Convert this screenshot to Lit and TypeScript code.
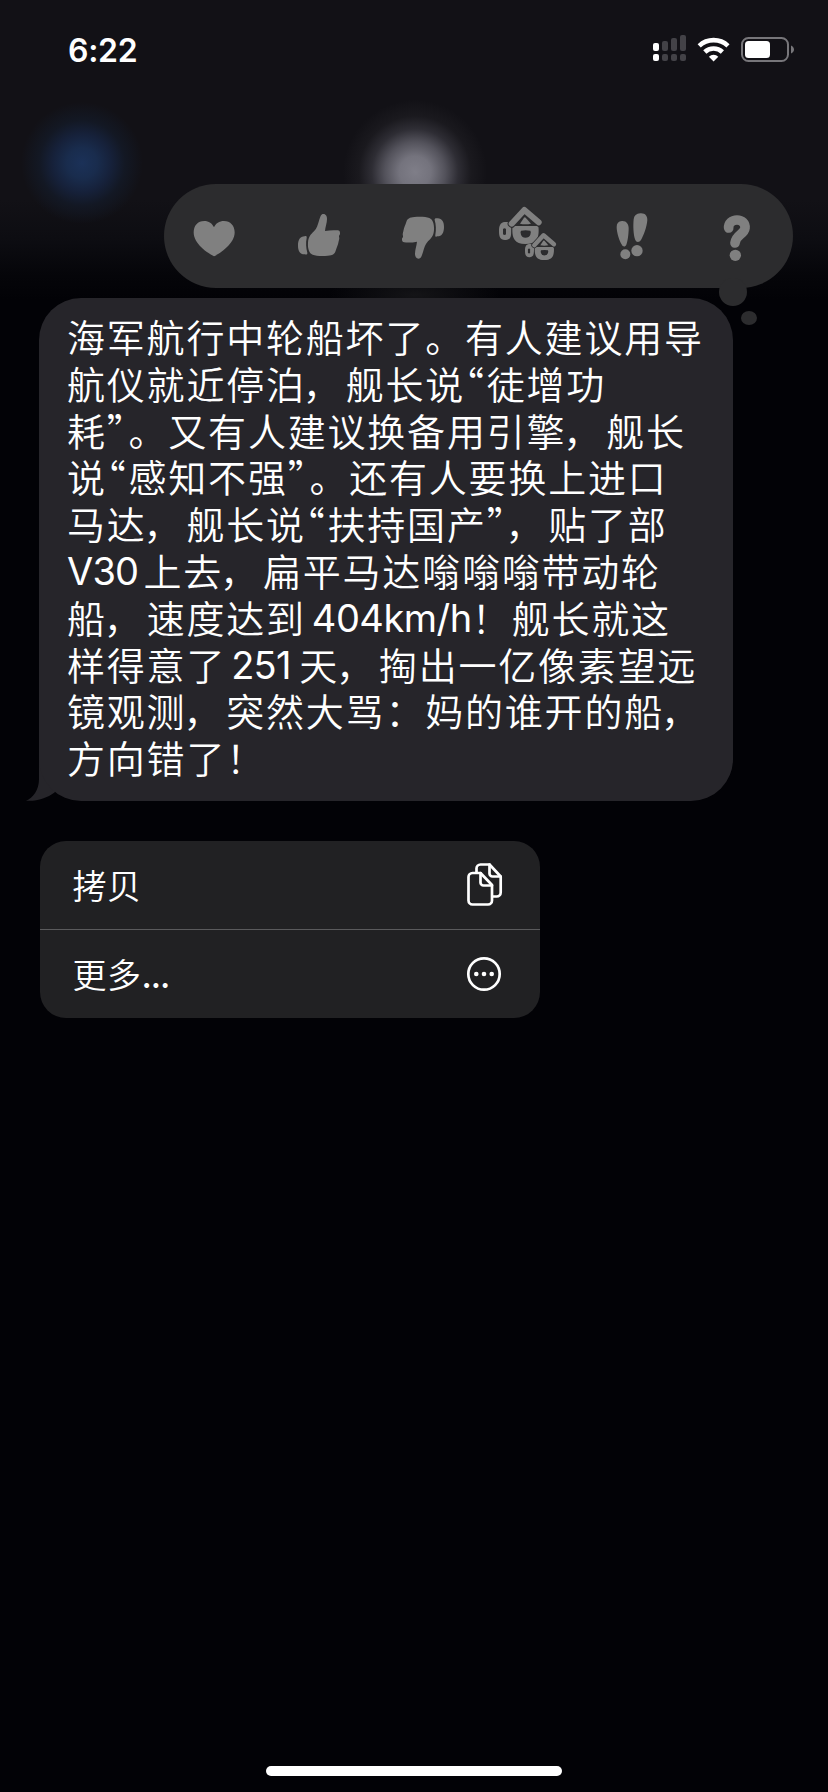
import { LitElement, html, css, svg } from "lit";
import { customElement } from "lit/decorators.js";

const THUMB = svg`
  <path d="M431 169C436 166 438 169 437 174C434 188 435 204 439 218C440 223 436 224 430 223C417 222 411 213 411 197C411 180 417 169 431 169Z"/>
  <path d="M487 102C495 102 498 109 498 117C498 128 493 142 492 153C506 150 520 150 531 151C537 152 537 157 537 161C537 165 533 166 534 170C536 176 534 180 533 184C531 196 527 203 524 212C521 222 514 226 500 227C484 229 465 228 455 224C443 219 440 203 441 188C442 170 450 163 459 154C468 144 470 135 474 122C478 110 480 102 487 102Z"/>`;

@customElement("app-root")
export class AppRoot extends LitElement {
  static styles = css`
    :host { display: block; }
    * { box-sizing: border-box; }
    .screen {
      position: relative; width: 828px; height: 1792px; overflow: hidden;
      display: flex; flex-direction: column; isolation: isolate;
      background: linear-gradient(#121116 0, #121116 200px, #0d0d12 238px, #050509 276px, #020206 300px);
      color: #fff; font-family: Inter, "Noto Sans CJK SC", sans-serif;
    }
    .glow { position: absolute; z-index: -1; border-radius: 50%; }
    .blue { left: 21px; top: 102px; width: 122px; height: 122px;
      background: radial-gradient(closest-side, #1b3158 0, #192c4d 25%, #16213a 48%, #131824 70%, transparent 100%); }
    .white { left: 343px; top: 100px; width: 144px; height: 144px;
      background: radial-gradient(closest-side, #7f7e88 0, #74737d 22%, #53525b 42%, #2e2d34 60%, #1a191e 78%, transparent 100%); }
    .trace { left: 330px; top: 270px; width: 170px; height: 50px;
      background: radial-gradient(closest-side, #141417, transparent); }
    .status { height: 98px; flex: none; display: flex; justify-content: space-between; align-items: center; padding: 2px 33px 0 68px; }
    .time { font-size: 32px; font-weight: 600; letter-spacing: -0.3px; }
    .icons { display: block; }
    .reactions {
      position: relative; flex: none; margin: 86px 0 0 164px; width: 629px; height: 104px; border-radius: 52px;
      background: #2c2c2e; display: flex; align-items: center; justify-content: space-between;
      padding: 0 26.3px 0 20.3px;
    }
    .reactions svg { display: block; fill: #808080; }
    .dot { position: absolute; background: #2c2c2e; border-radius: 50%; z-index: 1; }
    .d1 { left: 555px; top: 94px; width: 28px; height: 28px; }
    .d2 { left: 577px; top: 127px; width: 16px; height: 14px; }
    .bubble {
      position: relative; flex: none; margin: 10px 0 0 39px; width: 694px; height: 503px;
      border-radius: 42px; background: #26252a; padding: 15px 0 0 28px;
    }
    .tail { position: absolute; left: -14px; bottom: 0; z-index: -1; display: block; }
    .line { height: 46.8px; line-height: 46.8px; font-size: 38px; font-weight: 350; display: flex; white-space: pre;
      font-family: "Noto Sans CJK SC", sans-serif; letter-spacing: 1.8px; }
    .q { width: 21.7px; font-feature-settings: "halt" 1; }
    .comma { margin: 0 3px 0 -3px; }
    .latin { font-family: Inter, sans-serif; letter-spacing: 0; font-weight: 400; padding-top: 1.5px; }
    .v30 { width: 76.5px; letter-spacing: -0.8px; }
    .speed { width: 166px; padding-left: 6px; letter-spacing: -0.5px; }
    .days { width: 73px; padding-left: 5px; letter-spacing: -0.8px; }
    .menu { flex: none; margin: 40px 0 0 40px; width: 500px; height: 177px; border-radius: 26px; background: #212123; overflow: hidden; }
    .item { height: 88px; display: flex; align-items: center; justify-content: space-between; padding: 0 36px 0 32.5px;
      font-size: 34px; font-weight: 350; font-family: "Noto Sans CJK SC", sans-serif; letter-spacing: 0.5px; }
    .item + .item { border-top: 1px solid #5a5a5c; height: 89px; }
    .item svg { display: block; fill: none; stroke: #fff; stroke-width: 2.7; stroke-linejoin: round; stroke-linecap: round; }
    .label { display: flex; align-items: baseline; padding-bottom: 2px; }
    .ellipsis { font-family: Inter, sans-serif; font-feature-settings: "calt" 0; font-weight: 500; letter-spacing: -1px; }
    .home { width: 296px; height: 10px; border-radius: 5px; background: #fff; margin: auto auto 16px 266px; flex: none; }
  `;

  /* Splits a line so that quotes and commas get their own advance. */
  private text(s: string) {
    return s.split(/([“”，])/).filter(Boolean).map((part) =>
      part === "，" ? html`<span class="comma">，</span>`
      : part === "“" || part === "”" ? html`<span class="q">${part}</span>`
      : html`<span>${part}</span>`);
  }

  render() {
    return html`<div class="screen">
      <div class="glow blue"></div><div class="glow white"></div><div class="glow trace"></div>
      <div class="status">
        <span class="time">6:22</span>
        <svg class="icons" width="144" height="30" viewBox="0 0 144 30">
          <g fill="#fff"><rect x="2" y="8" width="6" height="8" rx="2"/><rect x="2" y="19" width="6" height="7" rx="2"/></g>
          <g fill="#434247">
            <rect x="11" y="6" width="6" height="10" rx="2"/><rect x="20" y="3" width="6" height="13" rx="2"/><rect x="29" y="0" width="6" height="16" rx="2"/>
            <rect x="11" y="19" width="6" height="7" rx="2"/><rect x="20" y="19" width="6" height="7" rx="2"/><rect x="29" y="19" width="6" height="7" rx="2"/>
          </g>
          <g transform="translate(-1 0)">
            <g fill="none" stroke="#fff" stroke-width="4.6">
              <path d="M49.2 10.8a21 21 0 0 1 28.8 0"/><path d="M54.8 17a12.8 12.8 0 0 1 17.6 0"/>
            </g>
            <path fill="#fff" d="M63.6 26.5L58.9 21.7A6.8 6.8 0 0 1 68.3 21.7Z"/>
          </g>
          <rect x="91" y="3" width="46" height="23" rx="6.5" fill="none" stroke="#77767a" stroke-width="2"/>
          <rect x="94" y="6" width="25" height="17" rx="3.5" fill="#fff"/>
          <path fill="#77767a" d="M140 10.5c4 1.8 4 6.4 0 8z"/>
        </svg>
      </div>
      <div class="reactions">
        <svg width="60" height="60" viewBox="73 78 180 180"><path d="M163 229C147 221 102 193 102 157C102 137 114 123 134 123C147 123 158 130 163 142C168 130 179 123 193 123C212 123 225 137 225 157C225 193 178 222 163 229Z"/></svg>
        <svg width="60" height="60" viewBox="384 78 180 180">${THUMB}</svg>
        <svg width="60" height="60" viewBox="700 78 180 180"><g transform="rotate(180 632 169)">${THUMB}</g></svg>
        <svg width="60" height="60" viewBox="84 78 180 180">
          ${this.ha("")}
          ${this.ha("translate(101.5 100) scale(.73)")}
        </svg>
        <svg width="60" height="60" viewBox="396 78 180 180">
          <path d="M456 123C469 122 476 132 476 145C476 163 473 184 469 194C466 201 459 201 456 195C448 182 440 158 440 141C440 130 445 124 456 123Z"/>
          <path d="M511 100C526 99 532 108 532 120C531 140 520 168 513 180C508 188 499 188 496 180C490 166 489 138 491 118C492 107 499 101 511 100Z"/>
          <circle cx="466" cy="223" r="15"/><circle cx="501" cy="212" r="17"/>
        </svg>
        <svg width="60" height="60" viewBox="710 78 180 180">
          <path d="M775 144C774 130 785 120 800 120C815 120 825 130 824 144C822 164 796 164 794 189" fill="none" stroke="#808080" stroke-width="29" stroke-linecap="round"/>
          <circle cx="795" cy="226" r="17"/>
        </svg>
        <span class="dot d1"></span><span class="dot d2"></span>
      </div>
      <div class="bubble">
        <svg class="tail" width="50" height="42" viewBox="0 0 50 42"><path fill="#26252a" d="M14 0V20C14 31 8 39 1 41.7C12 42.5 22 39 29.5 33.5L44 14V0Z"/></svg>
        <div class="line">${this.text("海军航行中轮船坏了。有人建议用导")}</div>
        <div class="line">${this.text("航仪就近停泊，舰长说“徒增功")}</div>
        <div class="line">${this.text("耗”。又有人建议换备用引擎，舰长")}</div>
        <div class="line">${this.text("说“感知不强”。还有人要换上进口")}</div>
        <div class="line">${this.text("马达，舰长说“扶持国产”，贴了部")}</div>
        <div class="line"><span class="latin v30">V30</span>${this.text("上去，扁平马达嗡嗡嗡带动轮")}</div>
        <div class="line">${this.text("船，速度达到")}<span class="latin speed">404km/h</span>${this.text("！舰长就这")}</div>
        <div class="line">${this.text("样得意了")}<span class="latin days">251</span>${this.text("天，掏出一亿像素望远")}</div>
        <div class="line">${this.text("镜观测，突然大骂：妈的谁开的船，")}</div>
        <div class="line">${this.text("方向错了！")}</div>
      </div>
      <div class="menu">
        <div class="item"><span class="label">拷贝</span>
          <svg width="40" height="48" viewBox="464 861 40 48">
            <path d="M476.5 872V868.5a4 4 0 0 1 4-4H489.5L500.7 876.5V892.5a4 4 0 0 1-4 4H493"/>
            <path d="M489.5 864.5V873.5a3 3 0 0 0 3 3H500.5"/>
            <path d="M472.5 873H480.5L492 885V900.5a4 4 0 0 1-4 4H472.5a4 4 0 0 1-4-4V877a4 4 0 0 1 4-4Z"/>
            <path d="M480.5 873V882.5a3 3 0 0 0 3 3H492"/>
          </svg></div>
        <div class="item"><span class="label">更多<span class="ellipsis">...</span></span>
          <svg width="40" height="40" viewBox="464 954 40 40"><circle cx="484" cy="974" r="15.7"/><g fill="#fff" stroke="none"><circle cx="476.3" cy="974" r="2.3"/><circle cx="484" cy="974" r="2.3"/><circle cx="491.7" cy="974" r="2.3"/></g></svg></div>
      </div>
      <div class="home"></div>
    </div>`;
  }

  private ha(transform: string) {
    return svg`<g transform=${transform}>
      <path fill-rule="evenodd" d="M104 126C118 124 126 130 124 150C123 168 124 178 107 180C90 181 87 170 87 154C87 138 90 128 104 126ZM99 147V163Q104 167 108 163V147Q104 143 99 147Z"/>
      <path fill-rule="evenodd" stroke="#2c2c2e" stroke-width="5" paint-order="stroke" d="M130 138H202Q207 140 206 150C206 175 200 192 166 192C134 192 127 175 127 150Q126 140 130 138ZM153 152Q150 155 153 164Q156 173 166 173Q178 173 181 164Q184 155 181 152Q167 149 153 152Z"/>
      <path d="M125 131L163 90L206 127" fill="none" stroke="#2c2c2e" stroke-width="24" stroke-linecap="round" stroke-linejoin="round"/>
      <path d="M125 131L163 90L206 127" fill="none" stroke="#808080" stroke-width="18" stroke-linecap="round" stroke-linejoin="round"/>
      <path d="M145 133L163 109L186 133Z" fill="#2c2c2e"/>
      <path d="M150 131L162 113Q164 111 167 113L183 131Q166 135 150 131Z"/>
    </g>`;
  }
}
